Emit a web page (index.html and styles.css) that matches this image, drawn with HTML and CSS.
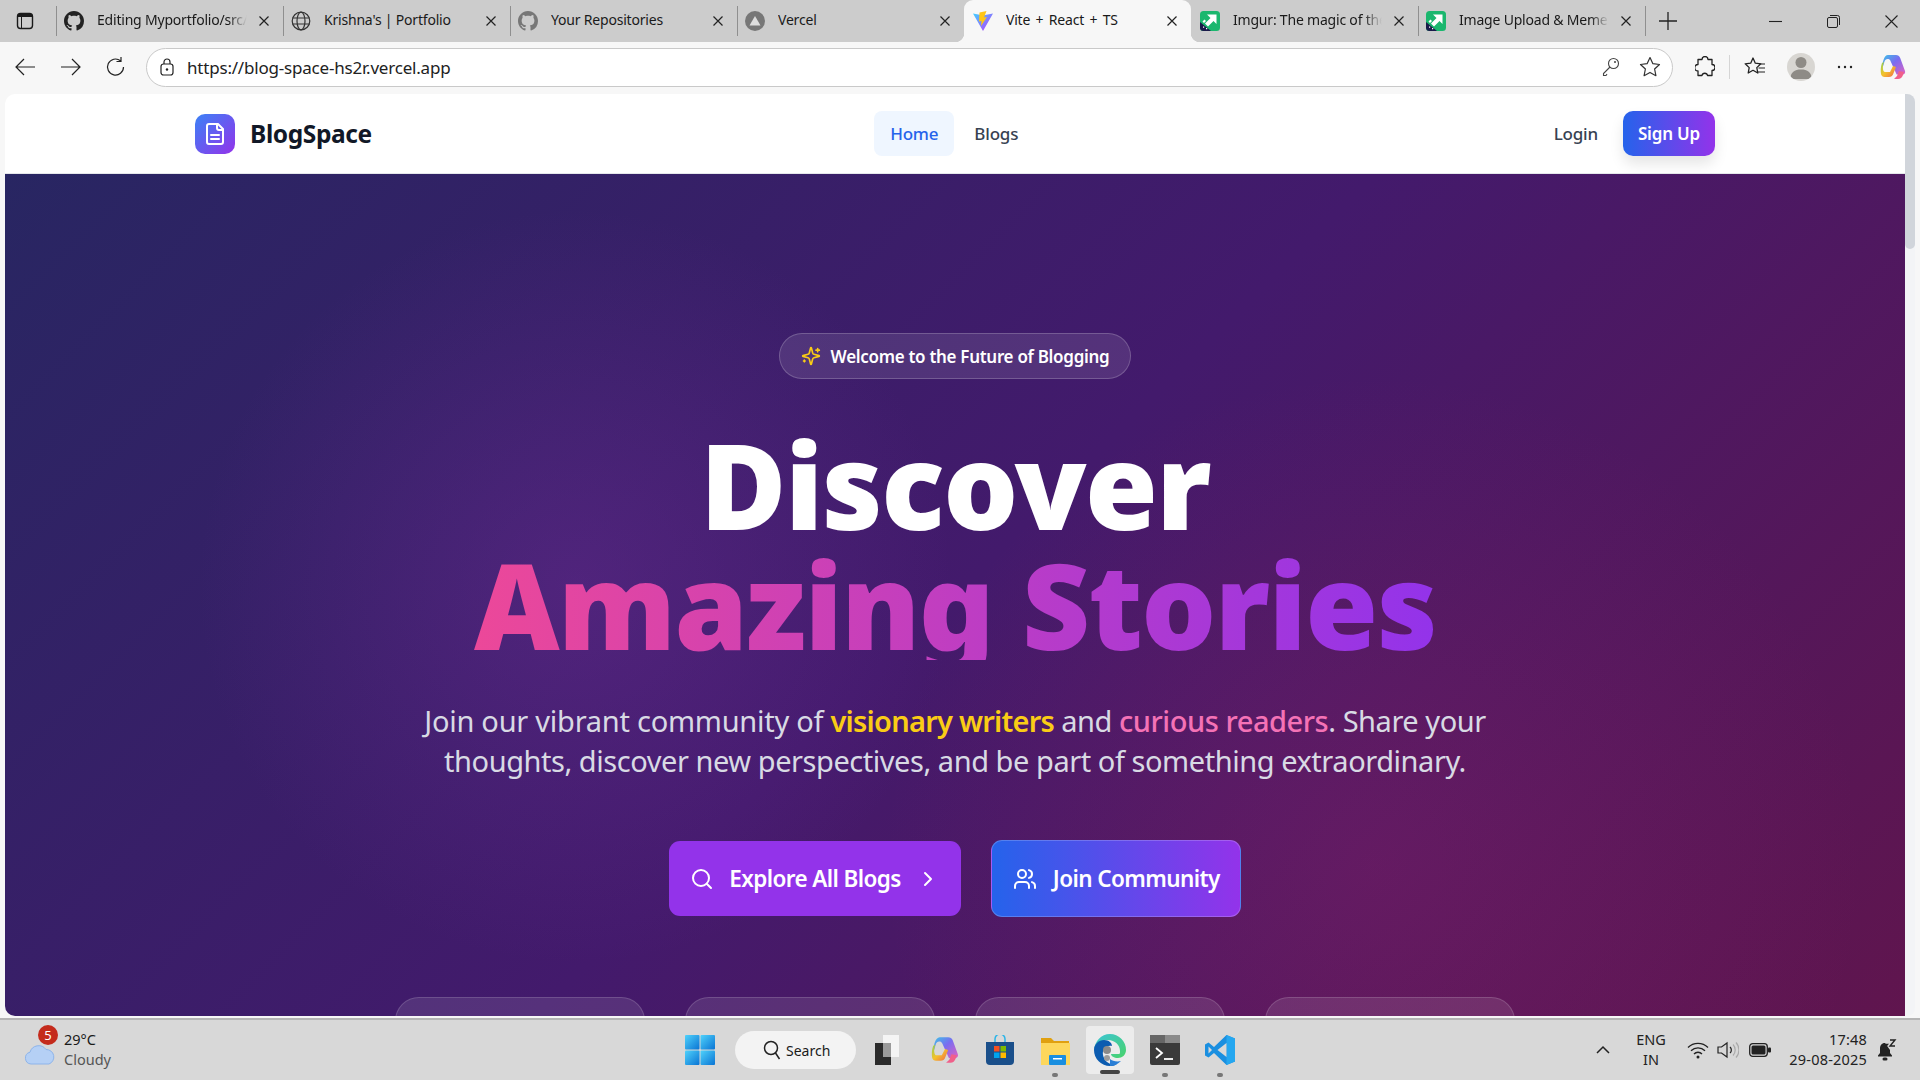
FILE: index.html
```html
<!DOCTYPE html>
<html lang="en">
<head>
	<meta charset="UTF-8">
	<title>Vite + React + TS</title>
	<link rel="stylesheet" href="styles.css">
</head>
<body>
	<svg class="defs" aria-hidden="true">
		<defs>
			<symbol id="i-github" viewBox="0 0 16 16"><path fill="currentColor" d="M8 0C3.58 0 0 3.58 0 8c0 3.54 2.29 6.53 5.47 7.59.4.07.55-.17.55-.38 0-.19-.01-.82-.01-1.49-2.01.37-2.53-.49-2.69-.94-.09-.23-.48-.94-.82-1.13-.28-.15-.68-.52-.01-.53.63-.01 1.08.58 1.23.82.72 1.21 1.87.87 2.33.66.07-.52.28-.87.51-1.07-1.78-.2-3.64-.89-3.64-3.95 0-.87.31-1.59.82-2.15-.08-.2-.36-1.02.08-2.12 0 0 .67-.21 2.2.82.64-.18 1.32-.27 2-.27.68 0 1.36.09 2 .27 1.53-1.04 2.2-.82 2.2-.82.44 1.1.16 1.92.08 2.12.51.56.82 1.27.82 2.15 0 3.07-1.87 3.75-3.65 3.95.29.25.54.73.54 1.48 0 1.07-.01 1.93-.01 2.2 0 .21.15.46.55.38A8.013 8.013 0 0016 8c0-4.42-3.58-8-8-8z"/></symbol>
			<symbol id="i-close" viewBox="0 0 12 12"><path d="M1.500 1.500l9 9M10.500 1.500l-9 9" fill="none" stroke="currentColor" stroke-width="1.200"/></symbol>
			<symbol id="i-imgur" viewBox="0 0 20 20">
				<rect width="20" height="20" rx="3.500" fill="#1bb76e"/>
				<path d="M0 11L11 20H3.500A3.500 3.500 0 0 1 0 16.500z" fill="#1a1a4a"/>
				<path d="M7 3.500h9.500V13l-3-3-5.500 5.500-3-3L10.500 7z" fill="#fff"/>
				<path d="M2.500 10.500l2-2 1.500 1.500-2 2zM3 15.500h1.200v1.200H3zM6 17h1.200v1.200H6z" fill="#fff"/>
			</symbol>
			<linearGradient id="g-copilot" x1="0" y1="0" x2="1" y2="1">
				<stop offset="0" stop-color="#3cc4e8"/>
				<stop offset=".45" stop-color="#7a6cf0"/>
				<stop offset="1" stop-color="#e062c0"/>
			</linearGradient>
			<linearGradient id="g-copilot2" x1="0" y1="0" x2="1" y2="1">
				<stop offset="0" stop-color="#8fd14f"/>
				<stop offset=".5" stop-color="#f4c22b"/>
				<stop offset="1" stop-color="#f0644a"/>
			</linearGradient>
			<symbol id="i-copilot" viewBox="0 0 28 28">
				<path d="M9 2h8c2 0 3.500 1 4.200 3l4.800 13c.6 1.800-.5 3.500-2.400 3.500h-6L11.500 8C11 6.500 10 6 8.500 6 7 6 6 7 5.500 8.500L3.500 15C3 10 5 2 9 2z" fill="url(#g-copilot)"/>
				<path d="M3 10c-1.500 4-1.500 8-1 11 .4 2 1.800 3 3.600 3h4.400c2 0 3.500-1 4.200-3l2.800-7-3-1-3 6H6C4 19 3 14 5 9z" fill="url(#g-copilot2)"/>
				<path d="M15 26h4c2.500 0 4-1.500 5-4l1-3-5-1-2 5z" fill="#f0608a"/>
			</symbol>
			<linearGradient id="g-edge" x1="0" y1="0" x2="1" y2="1">
				<stop offset="0" stop-color="#3bc4d8"/>
				<stop offset="1" stop-color="#49d36a"/>
			</linearGradient>
			<linearGradient id="g-vite" x1="0" y1="0" x2="1" y2="1">
				<stop offset="0" stop-color="#41d1ff"/>
				<stop offset="1" stop-color="#bd34fe"/>
			</linearGradient>
			<linearGradient id="g-start" x1="0" y1="0" x2="1" y2="1">
				<stop offset="0" stop-color="#4fd2fb"/>
				<stop offset="1" stop-color="#0a74d4"/>
			</linearGradient>
		</defs>
	</svg>

	<div class="tabstrip">
		<div class="strip-btn">
			<svg width="18" height="18" viewBox="0 0 18 18"><rect x="1.500" y="1.500" width="15" height="15" rx="3" fill="none" stroke="#1a1a1a" stroke-width="1.400"/><path d="M1.500 5a3 3 0 0 1 3-3.500h9a3 3 0 0 1 3 3.500z" fill="#1a1a1a"/><path d="M5.500 5v11" stroke="#1a1a1a" stroke-width="1"/></svg>
		</div>
		<div class="tab">
			<svg class="tab-icon icon-dark"><use href="#i-github"/></svg>
			<span class="tab-title fade">Editing Myportfolio/src/</span>
			<svg class="tab-close"><use href="#i-close"/></svg>
		</div>
		<div class="tab">
			<svg class="tab-icon" viewBox="0 0 20 20"><g fill="none" stroke="#333" stroke-width="1.200"><circle cx="10" cy="10" r="8.800"/><ellipse cx="10" cy="10" rx="4" ry="8.800"/><path d="M1.500 7h17M1.500 13h17"/></g></svg>
			<span class="tab-title">Krishna's | Portfolio</span>
			<svg class="tab-close"><use href="#i-close"/></svg>
		</div>
		<div class="tab">
			<svg class="tab-icon icon-grey"><use href="#i-github"/></svg>
			<span class="tab-title">Your Repositories</span>
			<svg class="tab-close"><use href="#i-close"/></svg>
		</div>
		<div class="tab">
			<svg class="tab-icon" viewBox="0 0 20 20"><circle cx="10" cy="10" r="10" fill="#777"/><path d="M10 5l5.500 9.500h-11z" fill="#ddd"/></svg>
			<span class="tab-title">Vercel</span>
			<svg class="tab-close"><use href="#i-close"/></svg>
		</div>
		<div class="tab active">
			<svg class="tab-icon" viewBox="0 0 20 20"><path d="M0 2.500l8 1.500h4l8-1.500L10 20z" fill="url(#g-vite)"/><path d="M13.500 0L6.500 1.500l-.5 9 2.500-.5-.5 5 6-9-3 .5z" fill="#ffc517"/></svg>
			<span class="tab-title wide">Vite + React + TS</span>
			<svg class="tab-close"><use href="#i-close"/></svg>
		</div>
		<div class="tab">
			<svg class="tab-icon"><use href="#i-imgur"/></svg>
			<span class="tab-title fade">Imgur: The magic of the</span>
			<svg class="tab-close"><use href="#i-close"/></svg>
		</div>
		<div class="tab last">
			<svg class="tab-icon"><use href="#i-imgur"/></svg>
			<span class="tab-title fade">Image Upload &amp; Meme</span>
			<svg class="tab-close"><use href="#i-close"/></svg>
		</div>
		<svg class="new-tab" width="18" height="18" viewBox="0 0 18 18"><path d="M9 0v18M0 9h18" stroke="#222" stroke-width="1.300"/></svg>
		<div class="win-btns">
			<svg width="13" height="13" viewBox="0 0 13 13"><path d="M0 6.500h13" stroke="#222" stroke-width="1.100"/></svg>
			<svg width="13" height="13" viewBox="0 0 13 13"><rect x=".5" y="2.500" width="10" height="10" rx="1.500" fill="none" stroke="#222"/><path d="M3 .5h7.500a2 2 0 0 1 2 2V10" fill="none" stroke="#222"/></svg>
			<svg width="13" height="13" viewBox="0 0 13 13"><path d="M.5.5l12 12M12.500.5l-12 12" stroke="#222" stroke-width="1.100"/></svg>
		</div>
	</div>

	<div class="toolbar">
		<svg class="tool back" width="22" height="20" viewBox="0 0 22 20"><path d="M21 10H2M10 2l-8 8 8 8" fill="none" stroke="#222" stroke-width="1.200"/></svg>
		<svg class="tool forward" width="22" height="20" viewBox="0 0 22 20"><path d="M1 10h19M12 2l8 8-8 8" fill="none" stroke="#222" stroke-width="1.200"/></svg>
		<svg class="tool reload" width="22" height="22" viewBox="0 0 22 22"><path d="M18.500 11a8 8 0 1 1-3-6.200M16 1v4.500h-4.500" fill="none" stroke="#222" stroke-width="1.200"/></svg>
		<div class="urlbar">
			<svg width="14" height="18" viewBox="0 0 14 18"><rect x="1" y="6" width="12" height="11" rx="2.500" fill="none" stroke="#222" stroke-width="1.200"/><path d="M4 6V4a3 3 0 0 1 6 0v2" fill="none" stroke="#222" stroke-width="1.200"/><circle cx="7" cy="11.500" r="1.200" fill="#222"/></svg>
			<span class="url">https://blog-space-hs2r.vercel.app</span>
			<svg class="key" width="18" height="20" viewBox="0 0 18 20"><circle cx="11.500" cy="6.500" r="5" fill="none" stroke="#444" stroke-width="1.100"/><path d="M8 10L1.500 16.500v2H4L5 17" fill="none" stroke="#444" stroke-width="1.100"/><circle cx="13" cy="5" r="1" fill="#444"/></svg>
			<svg width="22" height="22" viewBox="0 0 22 22"><path d="M11 1.500l2.900 6.200 6.600.8-4.900 4.500 1.300 6.700L11 16.400l-5.900 3.300 1.300-6.700L1.500 8.500l6.600-.8z" fill="none" stroke="#333" stroke-width="1.200" stroke-linejoin="round"/></svg>
		</div>
		<div class="tool-right">
			<svg class="ext" width="20" height="22" viewBox="0 0 20 22"><path d="M7 3.500a3 3 0 0 1 6 0h4v5a3 3 0 0 1 0 6v5h-4.500a2.800 2.800 0 0 0-5.500 0H3v-4.500a3 3 0 0 1 0-6.500V3.500z" fill="none" stroke="#222" stroke-width="1.300" stroke-linejoin="round"/></svg>
			<span class="tool-sep"></span>
			<svg class="fav" width="22" height="22" viewBox="0 0 22 22"><path d="M9 2l2.300 5.200 5.500.6-4 3.800 1 5.400L9 14.300 4.200 17l1-5.400-4-3.800 5.500-.6z" fill="none" stroke="#222" stroke-width="1.300" stroke-linejoin="round"/><path d="M15 8h6M14.500 12h6.500M13 16h8" stroke="#222" stroke-width="1.200"/></svg>
			<div class="avatar"><svg width="28" height="28" viewBox="0 0 28 28"><circle cx="14" cy="9.500" r="5.500" fill="#8e8b86"/><path d="M3.500 26c0-7 4-9.500 10.500-9.500S24.500 19 24.500 26z" fill="#8e8b86"/></svg></div>
			<svg class="dots" width="16" height="4" viewBox="0 0 16 4"><circle cx="2" cy="2" r="1.200" fill="#222"/><circle cx="8" cy="2" r="1.200" fill="#222"/><circle cx="14" cy="2" r="1.200" fill="#222"/></svg>
			<svg class="copilot" width="28" height="28"><use href="#i-copilot"/></svg>
		</div>
	</div>

	<div class="viewport">
		<div class="page">
			<nav class="nav">
				<a class="brand">
					<span class="brand-icon">
						<svg width="24" height="24" viewBox="0 0 24 24" fill="none" stroke="#fff" stroke-width="2" stroke-linecap="round" stroke-linejoin="round"><path d="M15 2H6a2 2 0 0 0-2 2v16a2 2 0 0 0 2 2h12a2 2 0 0 0 2-2V7Z"/><path d="M14 2v4a2 2 0 0 0 2 2h4"/><path d="M16 13H8M16 17H8"/></svg>
					</span>
					<span class="brand-name">BlogSpace</span>
				</a>
				<div class="nav-links">
					<a class="nav-link current">Home</a>
					<a class="nav-link">Blogs</a>
				</div>
				<div class="nav-auth">
					<a class="login">Login</a>
					<a class="signup">Sign Up</a>
				</div>
			</nav>
			<section class="hero">
				<div class="badge">
					<svg width="20" height="20" viewBox="0 0 24 24" fill="none" stroke="#facc15" stroke-width="2" stroke-linecap="round" stroke-linejoin="round"><path d="M9.937 15.500A2 2 0 0 0 8.500 14.063l-6.135-1.582a.5.5 0 0 1 0-.962L8.500 9.936A2 2 0 0 0 9.937 8.500l1.582-6.135a.5.5 0 0 1 .963 0L14.063 8.500A2 2 0 0 0 15.500 9.937l6.135 1.581a.5.5 0 0 1 0 .964L15.500 14.063a2 2 0 0 0-1.437 1.437l-1.582 6.135a.5.5 0 0 1-.963 0z"/><path d="M20 3v4M22 5h-4M4 17v2M5 18H3"/></svg>
					<span>Welcome to the Future of Blogging</span>
				</div>
				<h1 class="title">
					<span class="title-line">Discover</span>
					<span class="title-line grad">Amazing Stories</span>
				</h1>
				<p class="lead"><span class="lead-start">Join our vibrant community of</span> <b class="yellow">visionary writers</b> and <b class="pink">curious readers</b>. Share your<br>thoughts, discover new perspectives, and be part of something extraordinary.</p>
				<div class="cta">
					<a class="btn explore">
						<svg width="24" height="24" viewBox="0 0 24 24" fill="none" stroke="#fff" stroke-width="2" stroke-linecap="round" stroke-linejoin="round"><circle cx="11" cy="11" r="8"/><path d="m21 21-4.300-4.300"/></svg>
						<span>Explore All Blogs</span>
						<svg width="24" height="24" viewBox="0 0 24 24" fill="none" stroke="#fff" stroke-width="2" stroke-linecap="round" stroke-linejoin="round"><path d="m9 18 6-6-6-6"/></svg>
					</a>
					<a class="btn join">
						<svg width="24" height="24" viewBox="0 0 24 24" fill="none" stroke="#fff" stroke-width="2" stroke-linecap="round" stroke-linejoin="round"><path d="M16 21v-2a4 4 0 0 0-4-4H6a4 4 0 0 0-4 4v2"/><circle cx="9" cy="7" r="4"/><path d="M22 21v-2a4 4 0 0 0-3-3.870M16 3.130a4 4 0 0 1 0 7.750"/></svg>
						<span>Join Community</span>
					</a>
				</div>
				<div class="stats">
					<div class="stat"></div>
					<div class="stat"></div>
					<div class="stat"></div>
					<div class="stat"></div>
				</div>
			</section>
		</div>
		<div class="scrollbar"><div class="thumb"></div></div>
	</div>

	<footer class="taskbar">
		<div class="tb-left">
			<div class="weather-icon">
				<svg width="32" height="24" viewBox="0 0 32 24"><path d="M7 23a6 6 0 0 1-1-11.800A9 9 0 0 1 22 8.500a7.500 7.500 0 0 1 3 14.500z" fill="#b5d0f5" stroke="#8db4ea" stroke-width="1"/></svg>
				<span class="weather-badge">5</span>
			</div>
			<div class="weather-text">
				<span>29°C</span>
				<span class="muted">Cloudy</span>
			</div>
		</div>
		<div class="tb-center">
			<svg class="tb-icon" width="30" height="30" viewBox="0 0 30 30"><g fill="url(#g-start)"><rect width="14.500" height="14.500" rx="1"/><rect x="15.500" width="14.500" height="14.500" rx="1"/><rect y="15.500" width="14.500" height="14.500" rx="1"/><rect x="15.500" y="15.500" width="14.500" height="14.500" rx="1"/></g></svg>
			<div class="tb-search">
				<svg width="18" height="20" viewBox="0 0 18 20"><circle cx="8" cy="8" r="6.500" fill="none" stroke="#222" stroke-width="1.500"/><path d="M12.500 13l4 6" stroke="#222" stroke-width="1.500"/></svg>
				<span>Search</span>
			</div>
			<svg class="tb-icon task-view" width="24" height="30" viewBox="0 0 24 30"><rect x="8" width="16" height="22" fill="#f4f4f4"/><rect y="8" width="16" height="22" fill="#2a2a2a"/><rect x="8" y="8" width="8" height="14" fill="#9a9a9a"/></svg>
			<svg class="tb-icon spaced" width="30" height="30"><use href="#i-copilot"/></svg>
			<svg class="tb-icon spaced" width="30" height="30" viewBox="0 0 30 30"><path d="M10 8V4a5 5 0 0 1 10 0v4" fill="none" stroke="#2bb5e8" stroke-width="1.500"/><path d="M1 7h28v19a4 4 0 0 1-4 4H5a4 4 0 0 1-4-4z" fill="#1a4f8a"/><rect x="9" y="11" width="5.500" height="5.500" fill="#f25022"/><rect x="15.500" y="11" width="5.500" height="5.500" fill="#7fba00"/><rect x="9" y="17.500" width="5.500" height="5.500" fill="#00a4ef"/><rect x="15.500" y="17.500" width="5.500" height="5.500" fill="#ffb900"/></svg>
			<div class="tb-slot">
				<svg width="30" height="30" viewBox="0 0 30 30"><path d="M1 3h10l3 3h15v24H1z" fill="#e0a010"/><path d="M1 8h29v22H1z" fill="#fdd75c"/><rect x="9" y="20" width="17" height="10" rx="1" fill="#1a8fe0"/><rect x="13" y="23" width="9" height="1.500" fill="#fff"/></svg>
				<i class="run-dot"></i>
			</div>
			<div class="tb-slot edge-slot">
				<svg width="34" height="34" viewBox="0 0 34 34"><path d="M17 1a16 16 0 0 1 16 16c0 5-4 8-8 8s-7-2-7-4h8c1 0 1-1 1-3 0-6-5-11-12-11S3 11 1 17C2 8 8 1 17 1z" fill="url(#g-edge)"/><path d="M1 17c0-6 5-10 10-10 5 0 8 3 8 6-6-1-10 3-9 9 1 6 7 11 14 9-3 2-5 2-7 2A16 16 0 0 1 1 17z" fill="#0c5cb0"/><path d="M17 33c4 0 8-2 11-5-4 1-9 0-11-2z" fill="#2a7fd6"/><circle cx="14" cy="17" r="4" fill="#8a8a8a"/><rect x="11" y="22" width="6" height="6" rx="3" fill="#9c9c9c"/></svg>
				<i class="run-bar"></i>
			</div>
			<div class="tb-slot">
				<svg width="30" height="30" viewBox="0 0 30 30"><rect width="30" height="30" rx="2" fill="#3a3a3a"/><rect width="30" height="8" fill="#8a8a8a"/><rect width="15" height="8" fill="#666"/><path d="M6 13l6 5-6 5" fill="none" stroke="#fff" stroke-width="1.800"/><path d="M14 24h9" stroke="#fff" stroke-width="1.800"/></svg>
				<i class="run-dot"></i>
			</div>
			<div class="tb-slot">
				<svg width="30" height="30" viewBox="0 0 30 30"><path d="M21.500 0L30 3.500v23L21.500 30 9 18l-5.500 4.500L0 20.500v-11L3.500 7.500 9 12z" fill="#1a8fe0"/><path d="M21.500 0L30 3.500v23L21.500 30z" fill="#25a7f0"/><path d="M21.500 8L12.500 15l9 7z" fill="#d8d8d8"/><path d="M3.500 11.500L7 15l-3.500 3.500z" fill="#d8d8d8"/></svg>
				<i class="run-dot"></i>
			</div>
		</div>
		<div class="tb-right">
			<svg class="tray-up" width="16" height="10" viewBox="0 0 16 10"><path d="M2 8l6-6 6 6" fill="none" stroke="#222" stroke-width="1.500"/></svg>
			<div class="lang"><span>ENG</span><span>IN</span></div>
			<svg class="wifi" width="22" height="18" viewBox="0 0 22 18"><g fill="none" stroke="#222" stroke-width="1.300"><path d="M1 6.500a14 14 0 0 1 20 0M4 9.800a10 10 0 0 1 14 0M7 13a5.500 5.500 0 0 1 8 0"/></g><circle cx="11" cy="16" r="1.500" fill="#222"/></svg>
			<svg class="vol" width="22" height="18" viewBox="0 0 22 18"><path d="M1 6h3.500L10 2v14l-5.500-4H1z" fill="none" stroke="#222" stroke-width="1.200"/><path d="M13 6a4 4 0 0 1 0 6" fill="none" stroke="#222" stroke-width="1.200"/><path d="M16 3.500a8 8 0 0 1 0 11M19 1.500a11 11 0 0 1 0 15" fill="none" stroke="#aaa" stroke-width="1.200"/></svg>
			<svg class="batt" width="22" height="14" viewBox="0 0 22 14"><rect x=".7" y=".7" width="17.600" height="12.600" rx="3" fill="none" stroke="#222" stroke-width="1.300"/><rect x="2.500" y="2.500" width="14" height="9" rx="1.500" fill="#222"/><rect x="19" y="4.500" width="3" height="5" rx="1" fill="#222"/></svg>
			<div class="clock"><span>17:48</span><span>29-08-2025</span></div>
			<svg class="bell" width="20" height="22" viewBox="0 0 20 22"><path d="M8 4c-3.500 0-5 2.500-5 5.500V14l-2 2.500v1h14v-1L13 14v-3z" fill="#222"/><rect x="5.500" y="18.500" width="5" height="3" rx="1.500" fill="#222"/><path d="M7 5.500h3.500L7 9.500h3.500M13 1h5l-5 6h5" fill="none" stroke="#222" stroke-width="1.400"/></svg>
		</div>
	</footer>
</body>
</html>
```

FILE: styles.css
```css
*{
	margin: 0;
	padding: 0;
	box-sizing: border-box;
}
html, body{
	width: 1920px;
	height: 1080px;
	overflow: hidden;
}
body{
	display: flex;
	flex-direction: column;
	background-color: #f7f7f7;
	font-family: "Noto Sans", "Open Sans", sans-serif;
	color: #1a1a1a;
}
.defs{
	position: absolute;
	width: 0;
	height: 0;
}

/* tab strip */
.tabstrip{
	display: flex;
	align-items: center;
	height: 42px;
	background-color: #cccccc;
	flex: none;
}
.strip-btn{
	display: flex;
	align-items: center;
	justify-content: center;
	width: 50px;
	height: 42px;
	margin-right: 6px;
}
.tab{
	position: relative;
	display: flex;
	align-items: center;
	width: 227px;
	height: 30px;
	padding: 0 13px 0 7px;
	border-left: 1px solid #8f8f8f;
	font-size: 14px;
	letter-spacing: -0.2px;
}
.tab.active{
	height: 42px;
	border-left: none;
	background-color: #f7f7f7;
	border-radius: 9px 9px 0 0;
	align-self: flex-end;
	padding-left: 9px;
}
.tab.active + .tab{
	border-left: none;
	padding-left: 9px;
}
.tab.active::before, .tab.active::after{
	content: "";
	position: absolute;
	bottom: 0;
	width: 9px;
	height: 9px;
}
.tab.active::before{
	left: -9px;
	background: radial-gradient(circle at 0 0, #cccccc 9px, #f7f7f7 9.500px);
}
.tab.active::after{
	right: -9px;
	background: radial-gradient(circle at 100% 0, #cccccc 9px, #f7f7f7 9.500px);
}
.tab.last{
	width: 228px;
	border-right: 1px solid #8f8f8f;
}
.tab-icon{
	width: 20px;
	height: 20px;
	flex: none;
}
.icon-dark{
	color: #222;
}
.icon-grey{
	color: #777;
}
.tab-title{
	flex: 1;
	min-width: 0;
	margin: -3px 0 0 13px;
	white-space: nowrap;
	overflow: hidden;
}
.tab-title.wide{
	word-spacing: 2px;
}
.tab-title.fade{
	-webkit-mask-image: linear-gradient(90deg, #000 86%, transparent 98%);
	mask-image: linear-gradient(90deg, #000 86%, transparent 98%);
}
.tab-close{
	width: 12px;
	height: 12px;
	margin-left: 8px;
	flex: none;
	color: #222;
}
.new-tab{
	margin-left: 13px;
	flex: none;
}
.win-btns{
	display: flex;
	gap: 45px;
	margin-left: auto;
	padding-right: 22px;
}

/* address bar row */
.toolbar{
	display: flex;
	align-items: center;
	height: 52px;
	padding: 0 0 2px 14px;
	background-color: #f7f7f7;
	flex: none;
}
.tool{
	flex: none;
}
.forward{
	margin-left: 24px;
}
.reload{
	margin-left: 23px;
}
.urlbar{
	display: flex;
	align-items: center;
	width: 1527px;
	height: 39px;
	margin-left: 19px;
	padding: 0 11px 0 13px;
	background-color: #fff;
	border: 1px solid #c9c9c9;
	border-radius: 20px;
}
.url{
	margin-left: 13px;
	font-size: 17px;
	letter-spacing: -0.2px;
	color: #222;
}
.key{
	margin-left: auto;
	margin-right: 19px;
}
.tool-right{
	display: flex;
	align-items: center;
	flex: 1;
}
.ext{
	margin-left: 22px;
}
.tool-sep{
	width: 1px;
	height: 24px;
	margin-left: 14px;
	background-color: #d5d5d5;
}
.fav{
	margin-left: 14px;
}
.avatar{
	display: flex;
	align-items: center;
	justify-content: center;
	width: 28px;
	height: 28px;
	margin-left: 21px;
	border-radius: 50%;
	background-color: #d8d6d2;
	overflow: hidden;
}
.dots{
	margin-left: 22px;
}
.copilot{
	margin-left: 26px;
}

/* page area */
.viewport{
	display: flex;
	flex: none;
	height: 924px;
	padding-left: 5px;
}
.page{
	width: 1900px;
	height: 922px;
	background-color: #fff;
	border-radius: 10px 0 0 10px;
	overflow: hidden;
	display: flex;
	flex-direction: column;
}
.scrollbar{
	width: 10px;
	height: 922px;
	background-color: #f3f4f6;
	border-radius: 0 8px 8px 0;
}
.thumb{
	height: 155px;
	background-color: #d1d5db;
	border-radius: 0 8px 5px 5px;
}

/* site nav */
.nav{
	display: flex;
	align-items: center;
	justify-content: space-between;
	height: 80px;
	padding: 0 190px;
	border-bottom: 1px solid #e5e7eb;
	flex: none;
}
.brand{
	display: flex;
	align-items: center;
	gap: 15px;
}
.brand-icon{
	display: flex;
	align-items: center;
	justify-content: center;
	width: 40px;
	height: 40px;
	border-radius: 10px;
	background: linear-gradient(135deg, #3b82f6, #9333ea);
}
.brand-name{
	font-size: 24.500px;
	font-weight: 700;
	color: #111827;
	letter-spacing: -0.4px;
}
.nav-links{
	display: flex;
	align-items: center;
	gap: 4px;
	margin-left: -17px;
}
.nav-link{
	display: flex;
	align-items: center;
	height: 45px;
	padding: 0 16px;
	border-radius: 8px;
	font-size: 17px;
	font-weight: 500;
	color: #374151;
	letter-spacing: -0.2px;
}
.nav-link.current{
	background-color: #eff6ff;
	color: #2563eb;
}
.nav-auth{
	display: flex;
	align-items: center;
	gap: 25px;
}
.login{
	font-size: 17px;
	font-weight: 500;
	color: #374151;
	letter-spacing: -0.2px;
}
.signup{
	display: flex;
	align-items: center;
	height: 45px;
	padding: 0 15px;
	border-radius: 10px;
	background: linear-gradient(90deg, #2563eb, #9333ea);
	color: #fff;
	font-size: 17px;
	font-weight: 600;
	letter-spacing: -0.2px;
	box-shadow: 0 8px 14px rgba(0, 0, 0, 0.1);
}

/* hero */
.hero{
	flex: 1;
	display: flex;
	flex-direction: column;
	align-items: center;
	padding-top: 159px;
	color: #fff;
	overflow: hidden;
	background:
		radial-gradient(circle at 30% 49%, rgba(125, 50, 165, 0.32), transparent 27%),
		radial-gradient(circle at 72% 82%, rgba(175, 40, 120, 0.2), transparent 32%),
		linear-gradient(135deg, #282662 0%, #431a6c 50%, #60154e 100%);
}
.hero > *{
	flex: none;
}
.badge{
	display: flex;
	align-items: center;
	gap: 10px;
	height: 46px;
	padding: 0 21px;
	border: 1px solid rgba(255, 255, 255, 0.2);
	border-radius: 23px;
	background-color: rgba(255, 255, 255, 0.1);
	font-size: 17px;
	font-weight: 600;
	letter-spacing: -0.3px;
}
.title{
	margin-top: 41px;
	text-align: center;
	font-size: 118px;
	font-weight: 900;
	letter-spacing: -1.600px;
}
.title-line{
	display: block;
	height: 120px;
	padding-top: 10px;
	line-height: 110px;
}
.title-line.grad{
	background: linear-gradient(90deg, #ec4899, #9333ea);
	-webkit-background-clip: text;
	background-clip: text;
	color: transparent;
}
.lead{
	margin-top: 41px;
	text-align: center;
	font-size: 29px;
	line-height: 40px;
	letter-spacing: -0.45px;
	color: #d8dae4;
	font-weight: 400;
}
.lead-start{
	letter-spacing: -0.25px;
}
.yellow{
	color: #facc15;
	font-weight: 600;
	letter-spacing: -0.75px;
}
.pink{
	color: #f472b6;
	font-weight: 500;
}
.cta{
	display: flex;
	align-items: center;
	gap: 30px;
	margin-top: 59px;
}
.btn{
	display: flex;
	align-items: center;
	border-radius: 11px;
	font-size: 22.500px;
	font-weight: 600;
	letter-spacing: -0.6px;
}
.explore{
	gap: 15px;
	height: 75px;
	padding: 0 21px;
	background-color: #9333ea;
}
.join{
	gap: 16px;
	height: 77px;
	padding: 0 20px 0 21px;
	border: 1px solid rgba(255, 255, 255, 0.2);
	background: linear-gradient(90deg, #2563eb, #9333ea);
}
.stats{
	display: flex;
	gap: 40px;
	margin-top: 80px;
}
.stat{
	width: 250px;
	height: 120px;
	border: 1px solid rgba(255, 255, 255, 0.15);
	border-radius: 24px;
	background-color: rgba(255, 255, 255, 0.1);
}

/* windows taskbar */
.taskbar{
	display: flex;
	align-items: center;
	height: 62px;
	flex: none;
	background-color: #d8d8d8;
	border-top: 2px solid #b5b5b5;
}
.tb-left{
	display: flex;
	align-items: center;
	gap: 9px;
	width: 685px;
	flex: none;
	padding-left: 24px;
}
.weather-icon{
	position: relative;
	width: 31px;
	height: 24px;
	margin-top: 6px;
}
.weather-badge{
	position: absolute;
	top: -16px;
	left: 14px;
	width: 20px;
	height: 20px;
	border-radius: 50%;
	background-color: #c42b1c;
	color: #fff;
	font-size: 13px;
	line-height: 20px;
	text-align: center;
}
.weather-text{
	display: flex;
	flex-direction: column;
	margin-top: -3px;
	font-size: 14.500px;
	line-height: 20px;
}
.muted{
	color: #555;
}
.tb-center{
	display: flex;
	align-items: center;
	width: 590px;
	flex: none;
}
.tb-icon{
	flex: none;
}
.tb-search{
	display: flex;
	align-items: center;
	gap: 5px;
	width: 121px;
	height: 38px;
	margin: 0 19px 0 20px;
	padding-left: 28px;
	border-radius: 19px;
	background-color: #f3f3f3;
	font-size: 14px;
	flex: none;
}
.task-view{
	margin-right: 31px;
}
.spaced{
	margin-right: 25px;
}
.tb-slot{
	position: relative;
	display: flex;
	align-items: center;
	justify-content: center;
	width: 30px;
	height: 48px;
	flex: none;
	margin-right: 25px;
}
.edge-slot{
	width: 48px;
	margin: 0 16px 0 -9px;
	background-color: #ececec;
	border-radius: 4px;
}
.run-dot, .run-bar{
	position: absolute;
	bottom: -3px;
	left: 50%;
	width: 6px;
	height: 4px;
	margin-left: -3px;
	border-radius: 2px;
	background-color: #777;
}
.run-bar{
	bottom: 0;
	width: 20px;
	margin-left: -10px;
	background-color: #444;
}
.tb-right{
	display: flex;
	align-items: center;
	flex: 1;
	font-size: 14.500px;
	color: #222;
}
.tray-up{
	margin-left: 320px;
}
.lang{
	display: flex;
	flex-direction: column;
	align-items: center;
	width: 50px;
	margin: -3px 0 0 15px;
	line-height: 20px;
}
.wifi{
	margin-left: 11px;
}
.vol{
	margin-left: 8px;
}
.batt{
	margin-left: 10px;
}
.clock{
	display: flex;
	flex-direction: column;
	align-items: flex-end;
	width: 96px;
	margin-top: -3px;
	line-height: 20px;
	letter-spacing: 0.2px;
}
.bell{
	margin-left: 10px;
}
```
